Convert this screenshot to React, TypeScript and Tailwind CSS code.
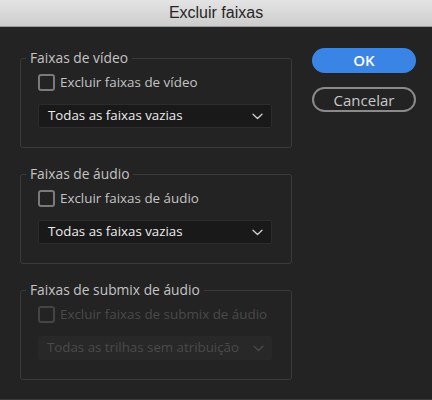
function Chevron({ dim }: { dim?: boolean }) {
  return (
    <svg width="11" height="7" viewBox="0 0 11 7" fill="none">
      <path
        d="M1 1.2l4.5 4.3L10 1.2"
        stroke={dim ? "#4a4a4a" : "#d0d0d0"}
        strokeWidth="1.3"
        strokeLinecap="round"
        strokeLinejoin="round"
      />
    </svg>
  );
}

function Group({
  title,
  label,
  value,
  disabled,
}: {
  title: string;
  label: string;
  value: string;
  disabled?: boolean;
}) {
  return (
    <fieldset className="border border-[#3a3a3a] rounded-[3px] pl-[17px] pr-[19px] pb-[19px]">
      <legend className="-ml-[12px] px-[4px] text-[13.8px] leading-[18px] text-[#c4c4c4] whitespace-nowrap">{title}</legend>
      <div className="pt-[6px]">
        <label className="flex items-center h-[18px] gap-[5px]">
          <span
            className={
              disabled
                ? "shrink-0 w-[17px] h-[17px] rounded-[3px] border-2 border-[#444]"
                : "shrink-0 w-[17px] h-[17px] rounded-[3px] border-2 border-[#7a7a7a]"
            }
          />
          <span
            className={
              disabled
                ? "text-[13.4px] whitespace-nowrap text-[#4a4a4a]"
                : "text-[13.4px] whitespace-nowrap text-[#c4c4c4]"
            }
          >
            {label}
          </span>
        </label>
        <div
          className={
            disabled
              ? "mt-[13px] h-[24px] flex items-center justify-between pl-[9px] pr-[8px] bg-[#282828] rounded-[2px]"
              : "mt-[13px] h-[24px] flex items-center justify-between pl-[9px] pr-[8px] bg-[#191919] border border-[#2c2c2c] rounded-[2px]"
          }
        >
          <span
            className={
              disabled
                ? "text-[13.3px] whitespace-nowrap text-[#4a4a4a]"
                : "text-[13.3px] whitespace-nowrap text-[#ececec]"
            }
          >
            {value}
          </span>
          <Chevron dim={disabled} />
        </div>
      </div>
    </fieldset>
  );
}

export default function App() {
  return (
    <div
      className="w-[432px] h-[400px] flex flex-col bg-[#232323] overflow-hidden"
      style={{ fontFamily: '"Open Sans", "Noto Sans", sans-serif' }}
    >
      <div className="h-[27px] shrink-0 flex items-center justify-center bg-gradient-to-b from-[#e4e4e4] to-[#cdcdcd] border-b border-[#9e9e9e]">
        <span className="text-[16px] text-[#262626]" style={{ fontFamily: '"Liberation Sans", Arial, sans-serif' }}>
          Excluir faixas
        </span>
      </div>
      <div className="flex-1 flex pl-[20px] pr-[16px] pt-[22px] border-b border-[#3a3a3a]">
        <div className="w-[272px] flex flex-col gap-[17px]">
          <Group title="Faixas de vídeo" label="Excluir faixas de vídeo" value="Todas as faixas vazias" />
          <Group title="Faixas de áudio" label="Excluir faixas de áudio" value="Todas as faixas vazias" />
          <Group
            title="Faixas de submix de áudio"
            label="Excluir faixas de submix de áudio"
            value="Todas as trilhas sem atribuição"
            disabled
          />
        </div>
        <div className="ml-auto w-[104px] flex flex-col gap-[14px] -mt-[1px]">
          <button className="h-[25px] rounded-full bg-[#3a84e6] text-white text-[15px] font-semibold">OK</button>
          <button className="h-[25px] rounded-full border-2 border-[#8a8a8a] text-[#c8c8c8] text-[15px]">Cancelar</button>
        </div>
      </div>
    </div>
  );
}
